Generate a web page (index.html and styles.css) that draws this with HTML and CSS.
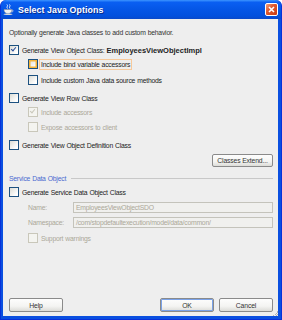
FILE: index.html
```html
<!DOCTYPE html>
<html lang="en">
<head>
    <meta charset="UTF-8">
    <title>Select Java Options</title>
    <link rel="stylesheet" href="styles.css">
</head>
<body>
    <div class="window">
        <div class="titlebar">
            <svg class="app-icon" width="11" height="11" viewBox="0 0 11 11">
                <path d="M4 0.5 C5.5 2 3 3 4.5 4.5 M6.5 0.5 C8 2 5.5 3 7 4.5" stroke="#fff" stroke-width="0.9" fill="none"/>
                <path d="M1 5.5 H9 C9 8 7.5 9.5 5 9.5 C2.5 9.5 1 8 1 5.5 Z" fill="#f2f2f2" stroke="#8a8a8a" stroke-width="0.5"/>
                <path d="M9 6 C10.5 6 10.5 8 8.5 8" stroke="#ddd" stroke-width="0.8" fill="none"/>
                <ellipse cx="5" cy="10.2" rx="4.5" ry="0.7" fill="#d8d8d8"/>
            </svg>
            <span class="title">Select Java Options</span>
            <div class="close">
                <svg width="7" height="7" viewBox="0 0 7 7">
                    <path d="M1 1 L6 6 M6 1 L1 6" stroke="#fff" stroke-width="1.6"/>
                </svg>
            </div>
        </div>
        <div class="content">
            <p class="intro">Optionally generate Java classes to add custom behavior.</p>

            <div class="row gap-5"><span class="cb checked"></span><span>Generate View Object Class: <b>EmployeesViewObjectImpl</b></span></div>
            <div class="row sub gap-2"><span class="cb hot"></span><span class="focus">Include bind <u>v</u>ariable accessors</span></div>
            <div class="row sub gap-4"><span class="cb"></span><span>Include custom Java data source methods</span></div>

            <div class="row gap-6"><span class="cb"></span><span><u>G</u>enerate View Row Class</span></div>
            <div class="row sub gap-2 off"><span class="cb checked"></span><span>Include a<u>c</u>cessors</span></div>
            <div class="row sub gap-3 off"><span class="cb"></span><span>E<u>x</u>pose accessors to client</span></div>

            <div class="row gap-6"><span class="cb"></span><span>Generate View Object <u>D</u>efinition Class</span></div>
            <div class="btn-row">
                <button class="btn extend">Classe<u>s</u> Extend...</button>
            </div>

            <div class="section"><span>Service Data Object</span><span class="rule"></span></div>
            <div class="row gap-2"><span class="cb"></span><span>Gene<u>r</u>ate Service Data Object Class</span></div>
            <div class="field gap-3 off">
                <label>Na<u>m</u>e:</label>
                <div class="input">EmployeesViewObjectSDO</div>
            </div>
            <div class="field gap-3 off">
                <label>Names<u>p</u>ace:</label>
                <div class="input">/com/stopdefaultexecution/model/data/common/</div>
            </div>
            <div class="row sub gap-4 off"><span class="cb"></span><span>Support <u>w</u>arnings</span></div>

            <div class="footer">
                <button class="btn"><u>H</u>elp</button>
                <div class="spacer"></div>
                <button class="btn default">OK</button>
                <button class="btn">Cancel</button>
            </div>
            <div class="grip"></div>
        </div>
    </div>
</body>
</html>
```

FILE: styles.css
```css
body {
    margin: 0;
    background-color: #fff;
    font-family: "Liberation Sans", Arial, sans-serif;
}
.window {
    width: 282px;
    height: 320px;
    box-sizing: border-box;
    background: #0a4fe0;
    border: 1px solid #0831d9;
    border-top: none;
    border-radius: 6px 6px 0 0;
    display: flex;
    flex-direction: column;
}
.titlebar {
    height: 19px;
    display: flex;
    align-items: center;
    padding: 0 3px 0 2px;
    border-radius: 6px 6px 0 0;
    background: linear-gradient(#3d95ff 0%, #0a5ff2 12%, #0556e6 50%, #0250dd 85%, #0a49c9 100%);
}
.app-icon {
    margin-right: 4px;
}
.title {
    color: #fff;
    font-weight: bold;
    font-size: 8.8px;
    text-shadow: 1px 1px 0 #0a2a8c;
    flex: 1;
    letter-spacing: 0.1px;
}
.close {
    width: 13px;
    height: 13px;
    box-sizing: border-box;
    border: 1px solid #fff;
    border-radius: 2px;
    background: linear-gradient(135deg, #f0a080 0%, #e05a30 40%, #c93a10 100%);
    display: flex;
    align-items: center;
    justify-content: center;
}
.content {
    flex: 1;
    margin: 0 3px 3px 2px;
    background-color: #eeeeee;
    padding: 8px 5px 4px 6px;
    display: flex;
    flex-direction: column;
    font-size: 6.8px;
    letter-spacing: -0.22px;
    word-spacing: 0.4px;
    color: #222;
    position: relative;
}
.intro {
    margin: 0;
    height: 12px;
    line-height: 12px;
    color: #333;
}
.row {
    height: 12px;
    display: flex;
    align-items: center;
    white-space: nowrap;
}
.row b {
    font-size: 7.5px;
    letter-spacing: 0;
}
.sub {
    padding-left: 19px;
}
.gap-2 { margin-top: 2px; }
.gap-3 { margin-top: 3px; }
.gap-4 { margin-top: 4px; }
.gap-5 { margin-top: 5px; }
.gap-6 { margin-top: 6px; }
u {
    text-decoration: none;
}
.cb {
    width: 8px;
    height: 8px;
    border: 1px solid #1c5180;
    background: linear-gradient(135deg, #dcdcd5 0%, #fff 80%);
    margin-right: 3px;
    position: relative;
    flex: none;
}
.cb.checked::after {
    content: "";
    position: absolute;
    left: 2px;
    top: 0px;
    width: 2px;
    height: 4px;
    border: solid #2a4f9c;
    border-width: 0 1.5px 1.5px 0;
    transform: rotate(40deg);
}
.cb.hot {
    box-shadow: inset 0 0 0 1.5px #f5b53c;
}
.focus {
    border: 1px solid #f7c99a;
    padding: 0 1px;
    margin-left: -2px;
    line-height: 9px;
}
.off {
    color: #aca899;
}
.off .cb {
    border-color: #c9c7ba;
    background: #f4f4f0;
}
.off .cb.checked::after {
    border-color: #c9c7ba;
}
.btn-row {
    margin-top: 3px;
    display: flex;
    justify-content: flex-end;
}
.btn {
    font-family: "Liberation Sans", Arial, sans-serif;
    font-size: 6.8px;
    letter-spacing: -0.15px;
    color: #333;
    height: 13px;
    padding: 0;
    border: 1px solid #8a8a8a;
    border-radius: 2px;
    background: linear-gradient(#fdfdfd 0%, #f4f4f2 60%, #dcdcd8 100%);
}
.extend {
    width: 61px;
}
.section {
    margin-top: 5px;
    height: 12px;
    display: flex;
    align-items: center;
    color: #4a6ad0;
}
.rule {
    flex: 1;
    height: 1px;
    background-color: #c8c8c8;
    margin-left: 5px;
}
.field {
    height: 12px;
    display: flex;
    align-items: center;
    padding-left: 19px;
}
.field label {
    width: 45px;
    flex: none;
}
.input {
    flex: 1;
    height: 11px;
    box-sizing: border-box;
    border: 1px solid #c4c3bb;
    background-color: #f0f0ee;
    padding-left: 2px;
    line-height: 9px;
    color: #aca899;
}
.footer {
    margin-top: auto;
    display: flex;
    gap: 5px;
}
.footer .btn {
    width: 54px;
    height: 14px;
}
.footer .default {
    box-shadow: inset 0 0 0 1px #7aa2e8;
}
.spacer {
    flex: 1;
}
.grip {
    position: absolute;
    right: 0;
    bottom: 0;
    width: 5px;
    height: 5px;
    background: linear-gradient(135deg, transparent 50%, #b0b0b0 50%, #b0b0b0 60%, transparent 60%, transparent 75%, #b0b0b0 75%, #b0b0b0 85%, transparent 85%);
}
```
